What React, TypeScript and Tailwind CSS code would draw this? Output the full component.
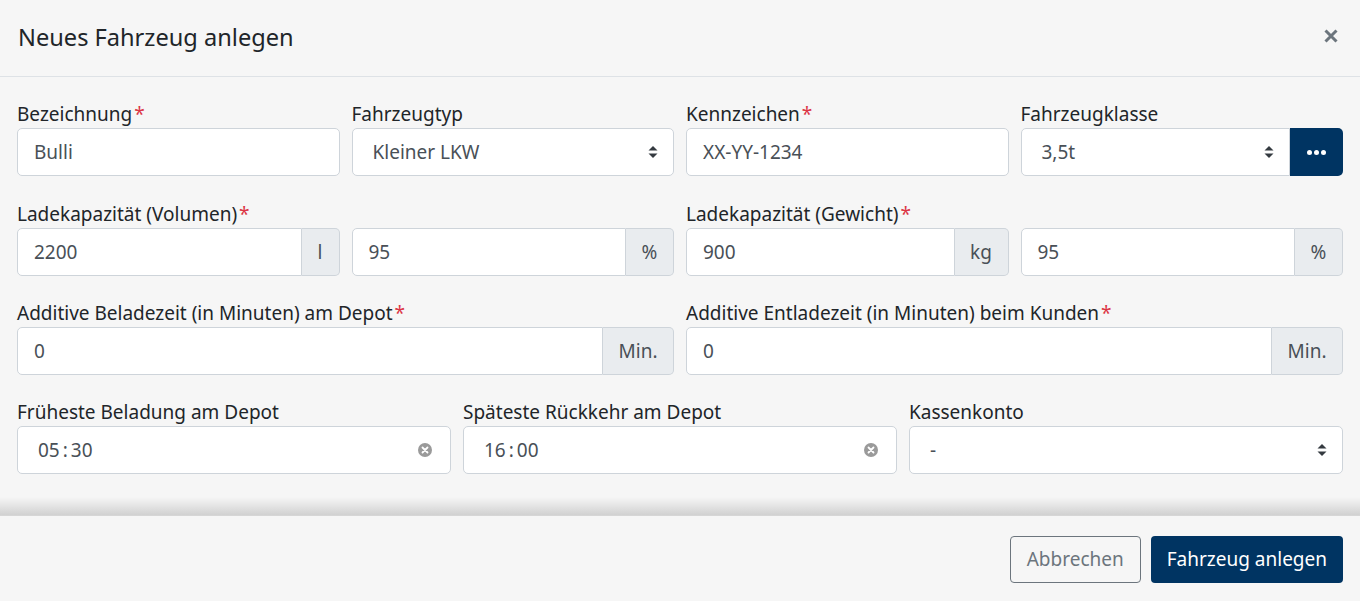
import React from "react";

const font = { fontFamily: '"Noto Sans", "Open Sans", sans-serif' };

const Label = (props: { text: string; required?: boolean }) => {
  return (
    <div className="h-[28px] leading-[29px] text-[19px] text-[#212529] whitespace-nowrap">
      {props.text}
      {props.required && <span className="text-[#dc3545] ml-[2px]">*</span>}
    </div>
  );
};

const SelectArrows = () => (
  <svg width="10" height="14" viewBox="0 0 10 14" className="text-[#343a40]">
    <path d="M5 1 L9.5 5.5 L0.5 5.5 Z" fill="currentColor" />
    <path d="M5 13 L9.5 8.5 L0.5 8.5 Z" fill="currentColor" />
  </svg>
);

const ClearIcon = () => (
  <svg width="14" height="14" viewBox="0 0 14 14">
    <circle cx="7" cy="7" r="7" fill="#9a9a9a" />
    <path d="M4.5 4.5 L9.5 9.5 M9.5 4.5 L4.5 9.5" stroke="#fff" strokeWidth="1.8" strokeLinecap="round" />
  </svg>
);

const TextInput = (props: { value: string }) => (
  <div className="h-12 flex items-center bg-white border border-[#ced4da] rounded-[5px] pl-4 text-[19px] text-[#495057]">
    {props.value}
  </div>
);

const SelectInput = (props: { value: string; roundedRight?: boolean }) => (
  <div
    className={`h-12 flex-1 flex items-center justify-between bg-white border border-[#ced4da] pl-5 pr-[15px] text-[19px] text-[#495057] ${
      props.roundedRight === false ? "rounded-l-[5px]" : "rounded-[5px]"
    }`}
  >
    <span>{props.value}</span>
    <SelectArrows />
  </div>
);

const AddonInput = (props: { value: string; addon: string; addonWidth: string }) => (
  <div className="h-12 flex">
    <div className="flex-1 flex items-center bg-white border border-[#ced4da] rounded-l-[5px] pl-4 text-[19px] text-[#495057]">
      {props.value}
    </div>
    <div
      className={`${props.addonWidth} flex items-center justify-center bg-[#e9ecef] border border-l-0 border-[#ced4da] rounded-r-[5px] text-[19px] text-[#495057]`}
    >
      {props.addon}
    </div>
  </div>
);

const TimeInput = (props: { h: string; m: string }) => (
  <div className="h-12 flex items-center justify-between bg-white border border-[#ced4da] rounded-[5px] pl-5 pr-[18px] text-[19px] text-[#495057]">
    <span>
      {props.h}
      <span className="mx-[3px]">:</span>
      {props.m}
    </span>
    <ClearIcon />
  </div>
);

export default function App() {
  return (
    <div style={font} className="w-[1360px] h-[601px] overflow-hidden bg-[#f6f6f6] flex flex-col">
      {/* header */}
      <div className="h-[77px] shrink-0 border-b border-[#dee2e6] flex items-center justify-between pl-[18px] pr-[22px]">
        <h1 className="text-[23.6px] text-[#212529] leading-none -mt-[1px]">Neues Fahrzeug anlegen</h1>
        <svg width="14" height="14" viewBox="0 0 14 14" className="-mt-[4px]">
          <path d="M1.5 1.5 L12.5 12.5 M12.5 1.5 L1.5 12.5" stroke="#6c757d" strokeWidth="3" />
        </svg>
      </div>

      {/* body */}
      <div className="shrink-0 px-[17px] pt-[23px] pb-[41px] flex flex-col gap-[23px]">
        <div className="grid grid-cols-4 gap-x-3 mb-px">
          <div>
            <Label text="Bezeichnung" required />
            <TextInput value="Bulli" />
          </div>
          <div>
            <Label text="Fahrzeugtyp" />
            <SelectInput value="Kleiner LKW" />
          </div>
          <div>
            <Label text="Kennzeichen" required />
            <TextInput value="XX-YY-1234" />
          </div>
          <div>
            <Label text="Fahrzeugklasse" />
            <div className="flex h-12">
              <SelectInput value="3,5t" roundedRight={false} />
              <div className="w-[53px] bg-[#003462] rounded-r-[5px] flex items-center justify-center gap-[2px]">
                <span className="w-[5px] h-[5px] rounded-full bg-white" />
                <span className="w-[5px] h-[5px] rounded-full bg-white" />
                <span className="w-[5px] h-[5px] rounded-full bg-white" />
              </div>
            </div>
          </div>
        </div>

        <div className="grid grid-cols-4 gap-x-3">
          <div className="col-span-2">
            <Label text="Ladekapazität (Volumen)" required />
            <div className="grid grid-cols-2 gap-x-3">
              <AddonInput value="2200" addon="l" addonWidth="w-[38px]" />
              <AddonInput value="95" addon="%" addonWidth="w-[48px]" />
            </div>
          </div>
          <div className="col-span-2">
            <Label text="Ladekapazität (Gewicht)" required />
            <div className="grid grid-cols-2 gap-x-3">
              <AddonInput value="900" addon="kg" addonWidth="w-[54px]" />
              <AddonInput value="95" addon="%" addonWidth="w-[48px]" />
            </div>
          </div>
        </div>

        <div className="grid grid-cols-2 gap-x-3">
          <div>
            <Label text="Additive Beladezeit (in Minuten) am Depot" required />
            <AddonInput value="0" addon="Min." addonWidth="w-[71px]" />
          </div>
          <div>
            <Label text="Additive Entladezeit (in Minuten) beim Kunden" required />
            <AddonInput value="0" addon="Min." addonWidth="w-[71px]" />
          </div>
        </div>

        <div className="grid grid-cols-3 gap-x-3">
          <div>
            <Label text="Früheste Beladung am Depot" />
            <TimeInput h="05" m="30" />
          </div>
          <div>
            <Label text="Späteste Rückkehr am Depot" />
            <TimeInput h="16" m="00" />
          </div>
          <div>
            <Label text="Kassenkonto" />
            <SelectInput value="-" />
          </div>
        </div>
      </div>

      {/* scroll shadow */}
      <div className="h-[18px] -mt-[18px] shrink-0 bg-gradient-to-b from-transparent to-black/15" />

      {/* footer */}
      <div className="flex-1 border-t border-[#d6d6d6] flex justify-end items-start pt-5 pr-[17px] gap-[10px]">
        <button className="h-[47px] px-[16px] border border-[#6c757d] rounded-[4px] text-[19px] text-[#6c757d] bg-transparent">
          Abbrechen
        </button>
        <button className="h-[47px] px-[16px] rounded-[4px] text-[19px] text-white bg-[#003462]">
          Fahrzeug anlegen
        </button>
      </div>
    </div>
  );
}
